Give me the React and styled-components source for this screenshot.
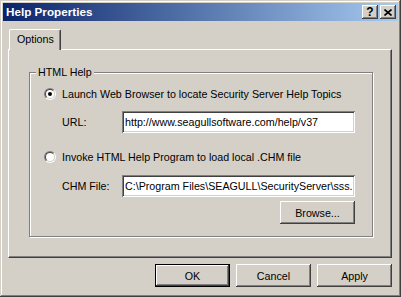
import React from "react";
import styled, { createGlobalStyle } from "styled-components";

const FONT = `"Liberation Sans", Arial, sans-serif`;
const SIZE = "10.7px";

const Global = createGlobalStyle`
  html, body { margin: 0; padding: 0; background: #D4D0C8; }
  body { font-family: ${FONT}; font-size: ${SIZE}; color: #000; }
  * { box-sizing: border-box; }
`;

const raised = `
  box-shadow: inset -1px -1px #404040, inset 1px 1px #ffffff,
    inset -2px -2px #808080, inset 2px 2px #D4D0C8;
`;

const Window = styled.div`
  width: 401px;
  height: 297px;
  background: #D4D0C8;
  padding: 3px;
  display: flex;
  flex-direction: column;
  box-shadow: inset -1px -1px #404040, inset 1px 1px #D4D0C8,
    inset -2px -2px #808080, inset 2px 2px #ffffff;
`;

const TitleBar = styled.div`
  height: 18px;
  display: flex;
  align-items: center;
  padding: 0 2px 0 3px;
  background: linear-gradient(to right, #0A246A, #A6CAF0);
`;

const Title = styled.div`
  flex: 1;
  color: #fff;
  font-weight: bold;
  font-size: 11.7px;
  line-height: 14px;
`;

const TitleButtons = styled.div`
  display: flex;
  gap: 2px;
`;

const CaptionButton = styled.div`
  width: 16px;
  height: 14px;
  background: #D4D0C8;
  display: flex;
  align-items: center;
  justify-content: center;
  font-weight: bold;
  font-size: 12px;
  line-height: 12px;
  ${raised}
`;

const Content = styled.div`
  padding: 8px 6px 0 5px;
  display: flex;
  flex-direction: column;
`;

const TabStrip = styled.div`
  display: flex;
  height: 20px;
  padding-left: 1px;
  position: relative;
  z-index: 1;
`;

const Tab = styled.div`
  width: 52px;
  height: 21px;
  background: #D4D0C8;
  border-top: 1px solid #fff;
  border-left: 1px solid #fff;
  border-right: 1px solid #404040;
  border-top-left-radius: 2px;
  border-top-right-radius: 2px;
  box-shadow: inset -1px 0 #808080;
  padding: 2px 0 0 7px;
  line-height: 14px;
`;

const Panel = styled.div`
  width: 384px;
  height: 209px;
  border-top: 1px solid #fff;
  border-left: 1px solid #fff;
  border-right: 1px solid #404040;
  border-bottom: 1px solid #404040;
  box-shadow: inset -1px -1px #808080;
  padding: 22px 18px 20px 20px;
`;

const Group = styled.div`
  position: relative;
  width: 344px;
  height: 165px;
  border: 1px solid #808080;
  box-shadow: inset 1px 1px #fff, 1px 1px #fff;
  padding: 15px 17px 0 14px;
  display: flex;
  flex-direction: column;
`;

const GroupCaption = styled.div`
  position: absolute;
  left: 6px;
  top: -8px;
  padding: 0 2px;
  background: #D4D0C8;
  line-height: 14px;
`;

const RadioRow = styled.label`
  display: flex;
  align-items: center;
  gap: 6px;
  height: 12px;
  margin-top: ${(p) => p.$top}px;
  line-height: 12px;
`;

const RadioOuter = styled.span`
  width: 12px;
  height: 12px;
  border-radius: 50%;
  border: 1px solid;
  border-color: #808080 #fff #fff #808080;
  flex: none;
  display: flex;
`;

const RadioInner = styled.span`
  flex: 1;
  border-radius: 50%;
  border: 1px solid;
  border-color: #404040 #D4D0C8 #D4D0C8 #404040;
  background: #fff;
  display: flex;
  align-items: center;
  justify-content: center;
`;

const Dot = styled.span`
  width: 4px;
  height: 4px;
  border-radius: 50%;
  background: #000;
`;

const FieldRow = styled.div`
  display: flex;
  align-items: center;
  height: 22px;
  margin-top: ${(p) => p.$top}px;
  padding-left: 18px;
`;

const FieldLabel = styled.span`
  width: 60px;
  flex: none;
`;

const TextBox = styled.input`
  width: 233px;
  height: 22px;
  border: none;
  outline: none;
  background: #fff;
  padding: 0 2px 0 3px;
  margin: 0;
  font-family: ${FONT};
  font-size: ${SIZE};
  color: #000;
  box-shadow: inset 1px 1px #808080, inset -1px -1px #fff,
    inset 2px 2px #404040, inset -2px -2px #D4D0C8;
`;

const ButtonRow = styled.div`
  display: flex;
  justify-content: flex-end;
  gap: 6px;
  margin-top: ${(p) => p.$top}px;
`;

const Button = styled.button`
  width: 75px;
  height: 23px;
  padding: 0;
  margin: 0;
  border: ${(p) => (p.$default ? "1px solid #000" : "none")};
  background: #D4D0C8;
  font-family: ${FONT};
  font-size: ${SIZE};
  color: #000;
  ${raised}
`;

function Radio({ checked, children, top }) {
  return (
    <RadioRow $top={top}>
      <RadioOuter>
        <RadioInner>{checked && <Dot />}</RadioInner>
      </RadioOuter>
      <span>{children}</span>
    </RadioRow>
  );
}

export default function App() {
  return (
    <>
      <Global />
      <Window>
        <TitleBar>
          <Title>Help Properties</Title>
          <TitleButtons>
            <CaptionButton>?</CaptionButton>
            <CaptionButton>
              <svg width="8" height="7" viewBox="0 0 8 7">
                <path d="M0.5 0.5 L7.5 6.5 M7.5 0.5 L0.5 6.5" stroke="#000" strokeWidth="1.6" />
              </svg>
            </CaptionButton>
          </TitleButtons>
        </TitleBar>
        <Content>
          <TabStrip>
            <Tab>Options</Tab>
          </TabStrip>
          <Panel>
            <Group>
              <GroupCaption>HTML Help</GroupCaption>
              <Radio checked top={0}>
                Launch Web Browser to locate Security Server Help Topics
              </Radio>
              <FieldRow $top={11}>
                <FieldLabel>URL:</FieldLabel>
                <TextBox readOnly value="http://www.seagullsoftware.com/help/v37" />
              </FieldRow>
              <Radio top={18}>Invoke HTML Help Program to load local .CHM file</Radio>
              <FieldRow $top={12}>
                <FieldLabel>CHM File:</FieldLabel>
                <TextBox readOnly value="C:\Program Files\SEAGULL\SecurityServer\sss." />
              </FieldRow>
              <ButtonRow $top={4}>
                <Button>Browse...</Button>
              </ButtonRow>
            </Group>
          </Panel>
          <ButtonRow $top={6}>
            <Button $default>OK</Button>
            <Button>Cancel</Button>
            <Button>Apply</Button>
          </ButtonRow>
        </Content>
      </Window>
    </>
  );
}
